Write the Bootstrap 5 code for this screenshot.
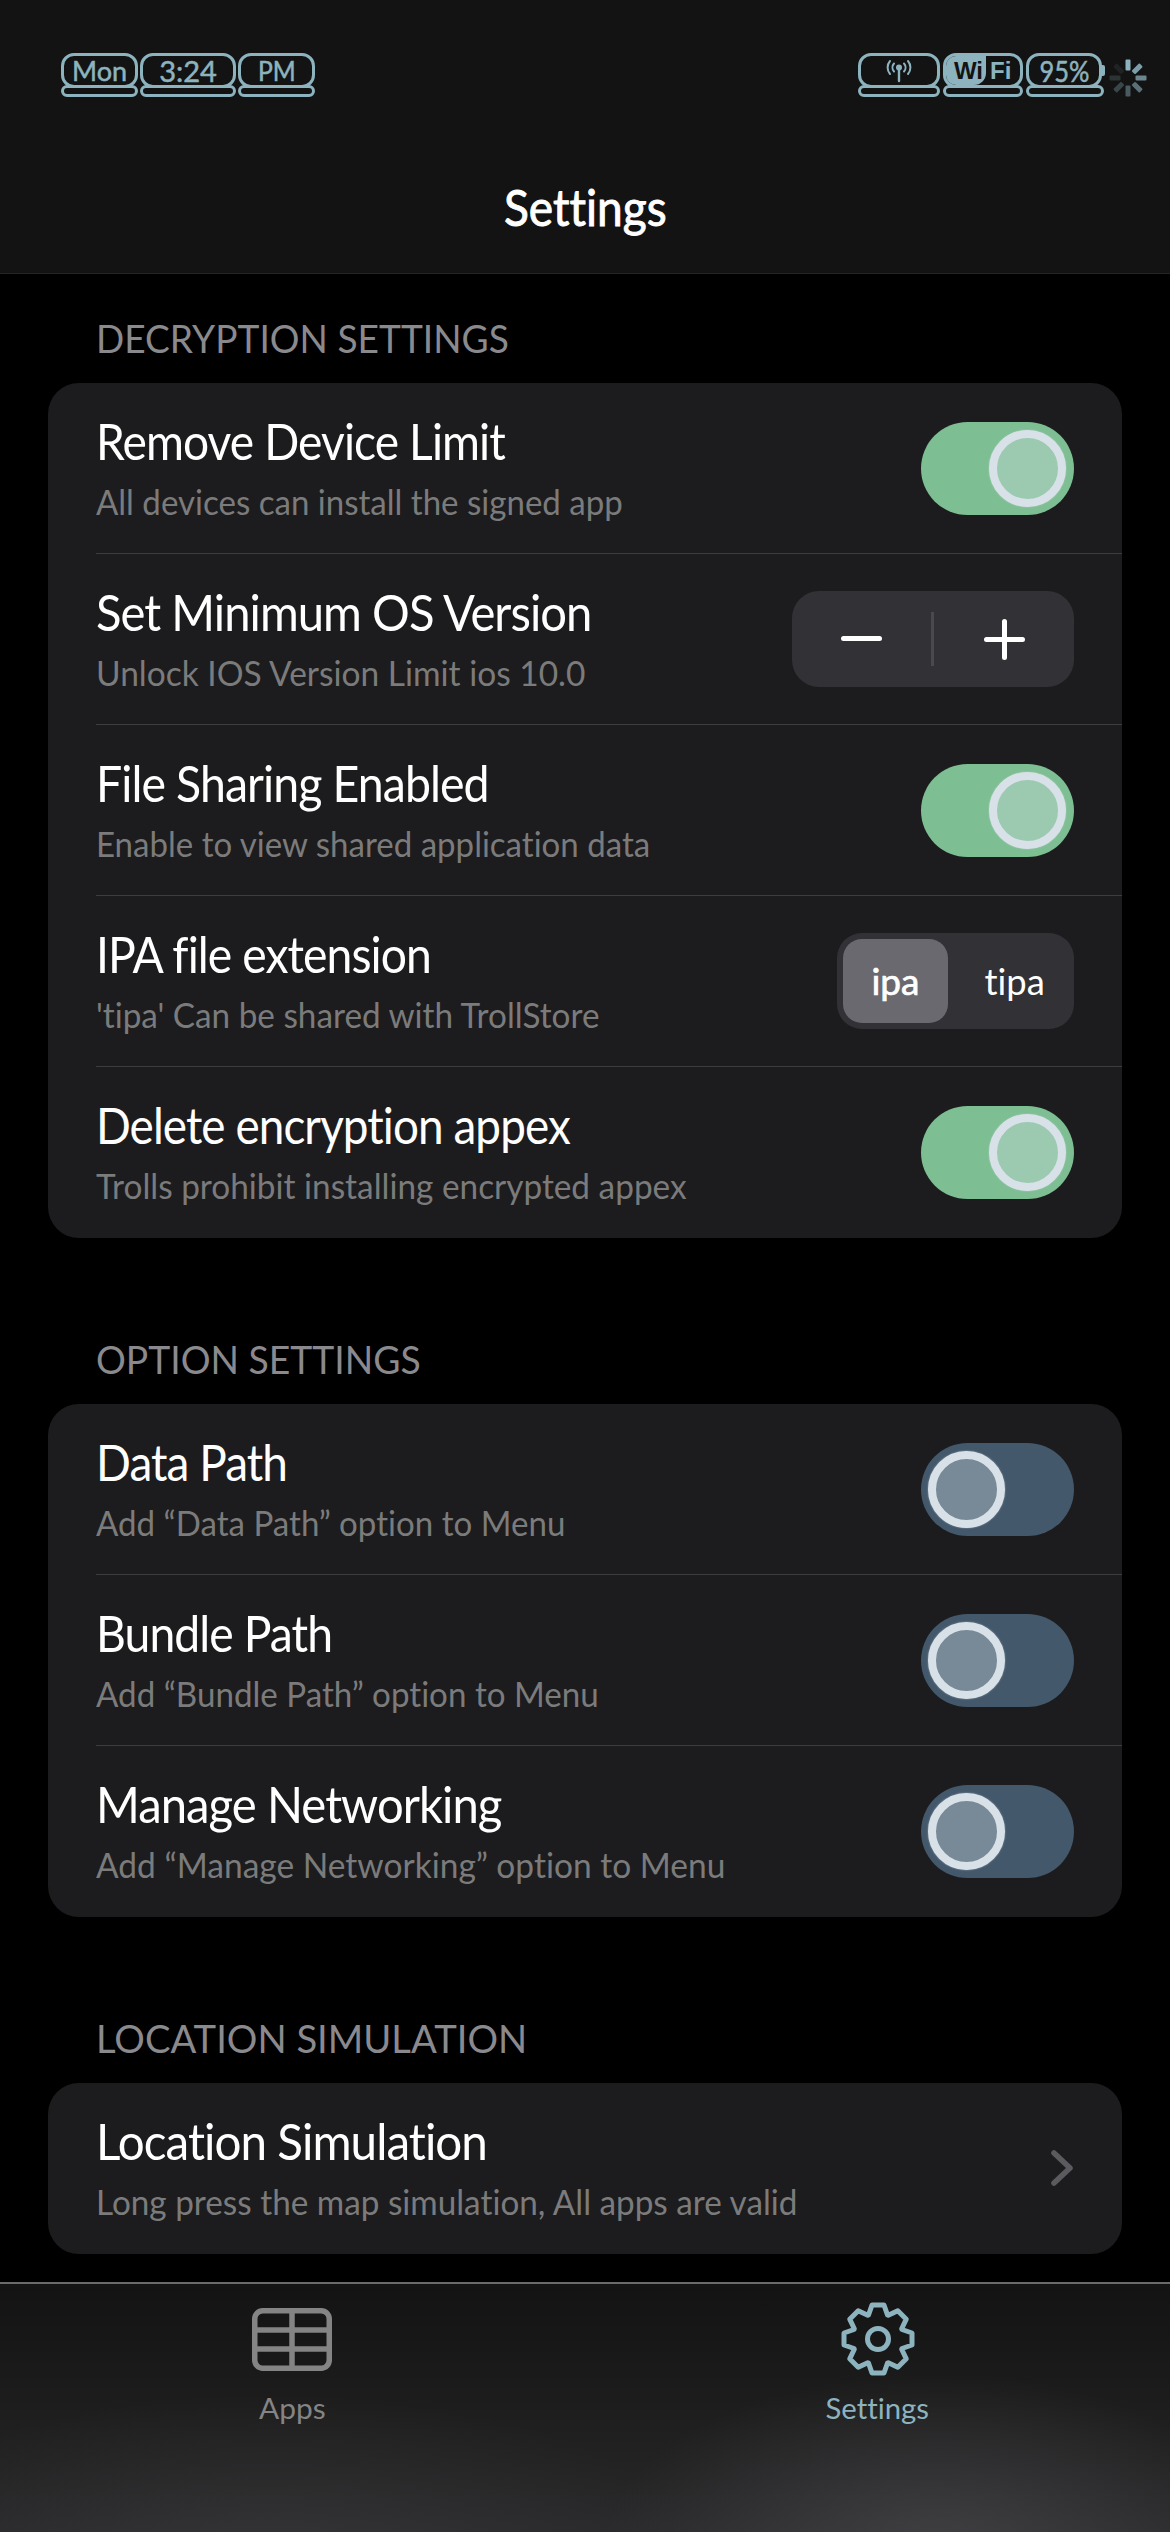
<!DOCTYPE html>
<html lang="en" data-bs-theme="dark">
<head>
<meta charset="utf-8">
<meta name="viewport" content="width=device-width, initial-scale=1">
<title>Settings</title>
<link href="https://cdn.jsdelivr.net/npm/bootstrap@5.3.0/dist/css/bootstrap.min.css" rel="stylesheet">
<style>
:root{--accent:#8db3bf}
html,body{height:2532px;overflow:hidden}
body{background:#000;color:#fff;font-family:Lato,"Open Sans",sans-serif;width:1170px;font-variant-ligatures:none}
svg{display:block}
.t{display:inline-block}
.topbar{height:274px;background:#131313;border-bottom:1px solid #242426;flex:none}
.statusbar{height:108px;padding:53px 23px 0 61px;color:var(--accent)}
.pill{position:relative;height:44px;display:flex;flex-direction:column}
.pill-face{height:35px;border:3px solid var(--accent);border-radius:13px;display:flex;align-items:center;justify-content:center;line-height:1;white-space:nowrap;-webkit-text-stroke:.5px var(--accent)}
.pill-foot{height:12px;margin-top:-3px;border:3px solid var(--accent);border-radius:6px}
.w-mon{width:77px;font-size:26px}.w-time{width:96px;font-size:29px}.w-pm{width:77px;font-size:26px}
.w-ant{width:82px}.w-wifi{width:80px;font:700 24px "Liberation Sans",Arial,sans-serif}.w-bat{width:78px;font-size:28px}
.w-wifi .pill-face{justify-content:flex-start;-webkit-text-stroke:0;overflow:hidden}
.w-wifi .ink{color:#131313;background:var(--accent);align-self:stretch;width:40px;padding:3px 3px 0 0;text-align:right;flex:none;border-radius:0 0 12px 0}
.w-wifi .fi{padding-left:4px}
.w-bat .pill-face{width:76px}
.nub{position:absolute;left:75px;top:12px;width:4px;height:11px;background:var(--accent);border-radius:0 2px 2px 0}
.spinner{margin:6px 0 0 2px;fill:var(--accent)}
.screen-title{font-size:50px;line-height:60px;padding-top:69px;-webkit-text-stroke:.9px #fff}
.settings-page{padding:0 48px;flex:1 1 auto}
.group-head{color:#8a8a8e;font-size:39px;font-weight:400;line-height:48px;height:166px;margin:0;padding:97px 0 0 48px;white-space:nowrap}
.group-head.first{height:109px;padding-top:40px}
.group-head .t,.s-name .t,.s-note .t{transform-origin:left center}
.group{background:#1c1c1e;border-radius:31px;overflow:hidden}
.setting{height:171px;margin-left:48px;padding-right:48px;border-bottom:1px solid #3d3d40}
.setting:last-child{border-bottom-color:transparent}
.s-text{padding-bottom:3px}
.s-name{font-size:50px;line-height:60px;margin-bottom:8px;white-space:nowrap;letter-spacing:-1px}
.s-note{font-size:35px;line-height:44px;color:#7b7b7b;white-space:nowrap}
.toggle{width:153px;height:93px;border-radius:47px;padding:8px 7px;background:#43586b;flex:none}
.toggle i{display:block;width:77px;height:77px;border-radius:50%;border:8px solid #d9e1e8;background:#788a97;box-shadow:0 0 2px rgba(217,225,232,.6)}
.toggle.on{background:#7dbe93;padding-left:68px}
.toggle.on i{background:#9bcab1}
.stepper{width:282px;height:96px;border-radius:27px;background:#323136;flex:none}
.divider{width:3px;height:54px;background:#4a494e}
.segment{width:237px;height:96px;border-radius:25px;padding:6px;background:#323136;font-size:37px;flex:none}
.seg-on{width:105px;height:84px;border-radius:19px;background:#6a696f;-webkit-text-stroke:.7px #fff}
.seg-off{padding-left:14px}
.tabs{height:250px;border-top:2px solid #6a6a6a;flex:none;background:radial-gradient(ellipse 330px 170px at 935px 260px,rgba(78,78,82,.6),transparent),radial-gradient(ellipse 420px 150px at 270px 260px,rgba(70,70,72,.35),transparent),linear-gradient(#131313,#1c1c1c 45%,#29292b)}
.tab-item{width:50%;color:#848484;font-size:29px;line-height:36px}
.tab-item.active{color:var(--accent)}
.ico-grid{margin:24px 2px 19px 0}
.ico-gear{margin:18px 0 14px}
</style>
</head>
<body class="d-flex flex-column">
<header class="topbar d-flex flex-column">
  <div class="statusbar d-flex justify-content-between">
    <div class="d-flex" style="gap:2px">
      <div class="pill w-mon"><div class="pill-face"><span class="t" data-w="55">Mon</span></div><div class="pill-foot"></div></div>
      <div class="pill w-time"><div class="pill-face"><span class="t" data-w="58">3:24</span></div><div class="pill-foot"></div></div>
      <div class="pill w-pm"><div class="pill-face"><span class="t" data-w="38">PM</span></div><div class="pill-foot"></div></div>
    </div>
    <div class="d-flex" style="gap:3px">
      <div class="pill w-ant"><div class="pill-face">
        <svg width="26" height="24" viewBox="0 0 26 24" fill="none" stroke="currentColor" stroke-width="2" stroke-linecap="round"><circle cx="13" cy="8.500" r="3" fill="currentColor" stroke="none"/><path d="M13 9v13" stroke-width="2.400"/><path d="M8 4.500a6 6 0 0 0 0 8M18 4.500a6 6 0 0 1 0 8M4 2a10 10 0 0 0 0 13M22 2a10 10 0 0 1 0 13"/></svg>
      </div><div class="pill-foot"></div></div>
      <div class="pill w-wifi"><div class="pill-face"><span class="ink">Wi</span><span class="fi">Fi</span></div><div class="pill-foot"></div></div>
      <div class="pill w-bat"><div class="pill-face"><span class="t" data-w="50">95%</span></div><div class="pill-foot"></div><div class="nub"></div></div>
      <svg class="spinner" width="38" height="38" viewBox="-19 -19 38 38"><rect x="-2.500" y="-18.500" width="5" height="11" rx="1"/><rect x="-2.500" y="-18.500" width="5" height="11" rx="1" transform="rotate(45)" opacity=".87"/><rect x="-2.500" y="-18.500" width="5" height="11" rx="1" transform="rotate(90)" opacity=".72"/><rect x="-2.500" y="-18.500" width="5" height="11" rx="1" transform="rotate(135)" opacity=".58"/><rect x="-2.500" y="-18.500" width="5" height="11" rx="1" transform="rotate(180)" opacity=".45"/><rect x="-2.500" y="-18.500" width="5" height="11" rx="1" transform="rotate(225)" opacity=".32"/><rect x="-2.500" y="-18.500" width="5" height="11" rx="1" transform="rotate(270)" opacity=".2"/><rect x="-2.500" y="-18.500" width="5" height="11" rx="1" transform="rotate(315)" opacity=".1"/></svg>
    </div>
  </div>
  <div class="screen-title text-center"><span class="t" data-w="163">Settings</span></div>
</header>
<main class="settings-page">
  <h2 class="group-head first"><span class="t" data-w="413">DECRYPTION SETTINGS</span></h2>
  <section class="group">
    <div class="setting d-flex align-items-center justify-content-between"><div class="s-text"><div class="s-name"><span class="t" data-w="409">Remove Device Limit</span></div><div class="s-note"><span class="t" data-w="527">All devices can install the signed app</span></div></div><div class="toggle on"><i></i></div></div>
    <div class="setting d-flex align-items-center justify-content-between"><div class="s-text"><div class="s-name"><span class="t" data-w="495">Set Minimum OS Version</span></div><div class="s-note"><span class="t" data-w="489">Unlock IOS Version Limit ios 10.0</span></div></div>
      <div class="stepper d-flex align-items-center"><svg width="139" height="96" stroke="#fff" stroke-width="5" stroke-linecap="round"><path d="M51.500 47.500H87.500"/></svg><div class="divider"></div><svg width="140" height="96" stroke="#fff" stroke-width="5" stroke-linecap="round"><path d="M52.500 48.500H88.500M70.500 30.500V66.500"/></svg></div></div>
    <div class="setting d-flex align-items-center justify-content-between"><div class="s-text"><div class="s-name"><span class="t" data-w="393">File Sharing Enabled</span></div><div class="s-note"><span class="t" data-w="554">Enable to view shared application data</span></div></div><div class="toggle on"><i></i></div></div>
    <div class="setting d-flex align-items-center justify-content-between"><div class="s-text"><div class="s-name"><span class="t" data-w="335">IPA file extension</span></div><div class="s-note"><span class="t" data-w="503">'tipa' Can be shared with TrollStore</span></div></div>
      <div class="segment d-flex"><div class="seg-on d-flex align-items-center justify-content-center"><span class="t" data-w="48">ipa</span></div><div class="seg-off flex-fill d-flex align-items-center justify-content-center"><span class="t" data-w="60">tipa</span></div></div></div>
    <div class="setting d-flex align-items-center justify-content-between"><div class="s-text"><div class="s-name"><span class="t" data-w="474">Delete encryption appex</span></div><div class="s-note"><span class="t" data-w="591">Trolls prohibit installing encrypted appex</span></div></div><div class="toggle on"><i></i></div></div>
  </section>
  <h2 class="group-head"><span class="t" data-w="325">OPTION SETTINGS</span></h2>
  <section class="group">
    <div class="setting d-flex align-items-center justify-content-between"><div class="s-text"><div class="s-name"><span class="t" data-w="191">Data Path</span></div><div class="s-note"><span class="t" data-w="469">Add “Data Path” option to Menu</span></div></div><div class="toggle"><i></i></div></div>
    <div class="setting d-flex align-items-center justify-content-between"><div class="s-text"><div class="s-name"><span class="t" data-w="236">Bundle Path</span></div><div class="s-note"><span class="t" data-w="503">Add “Bundle Path” option to Menu</span></div></div><div class="toggle"><i></i></div></div>
    <div class="setting d-flex align-items-center justify-content-between"><div class="s-text"><div class="s-name"><span class="t" data-w="405">Manage Networking</span></div><div class="s-note"><span class="t" data-w="629">Add “Manage Networking” option to Menu</span></div></div><div class="toggle"><i></i></div></div>
  </section>
  <h2 class="group-head"><span class="t" data-w="431">LOCATION SIMULATION</span></h2>
  <section class="group">
    <div class="setting d-flex align-items-center justify-content-between"><div class="s-text"><div class="s-name"><span class="t" data-w="391">Location Simulation</span></div><div class="s-note"><span class="t" data-w="701">Long press the map simulation, All apps are valid</span></div></div>
      <svg width="24" height="38" viewBox="0 0 24 38" fill="none" stroke="#5b5b5f" stroke-width="5.500" stroke-linecap="round" stroke-linejoin="round"><path d="M4 4L20 19L4 34"/></svg></div>
  </section>
</main>
<nav class="tabs d-flex">
  <div class="tab-item d-flex flex-column align-items-center"><svg class="ico-grid" width="80" height="63" viewBox="0 0 80 63" fill="none" stroke="currentColor" stroke-width="5.500"><rect x="2.750" y="2.750" width="74.500" height="57.500" rx="8"/><path d="M40 3v57M3 22h74M3 41h74"/></svg><span class="t" data-w="67">Apps</span></div>
  <div class="tab-item active d-flex flex-column align-items-center"><svg class="ico-gear" width="74" height="74" viewBox="-37 -37 74 74" fill="none" stroke="currentColor" stroke-width="5" stroke-linejoin="round"><circle r="10.500"/><path id="gear"/></svg><span class="t" data-w="103">Settings</span></div>
</nav>
<script src="https://cdn.jsdelivr.net/npm/bootstrap@5.3.0/dist/js/bootstrap.bundle.min.js"></script>
<script>
// Eight-tooth cog outline
let d='';
for(let k=0;k<8;k++){
  const a=k*Math.PI/4;
  [[-9.5,-24],[-6,-34],[6,-34],[9.5,-24]].forEach(([x,y])=>{
    d+=(d?'L':'M')+(x*Math.cos(a)-y*Math.sin(a)).toFixed(2)+' '+(x*Math.sin(a)+y*Math.cos(a)).toFixed(2);
  });
}
document.getElementById('gear').setAttribute('d',d+'Z');
// Condense each label to its set width
document.querySelectorAll('[data-w]').forEach(e=>{
  e.style.transform='scaleX('+(e.dataset.w/e.offsetWidth).toFixed(4)+')';
});
</script>
</body>
</html>
